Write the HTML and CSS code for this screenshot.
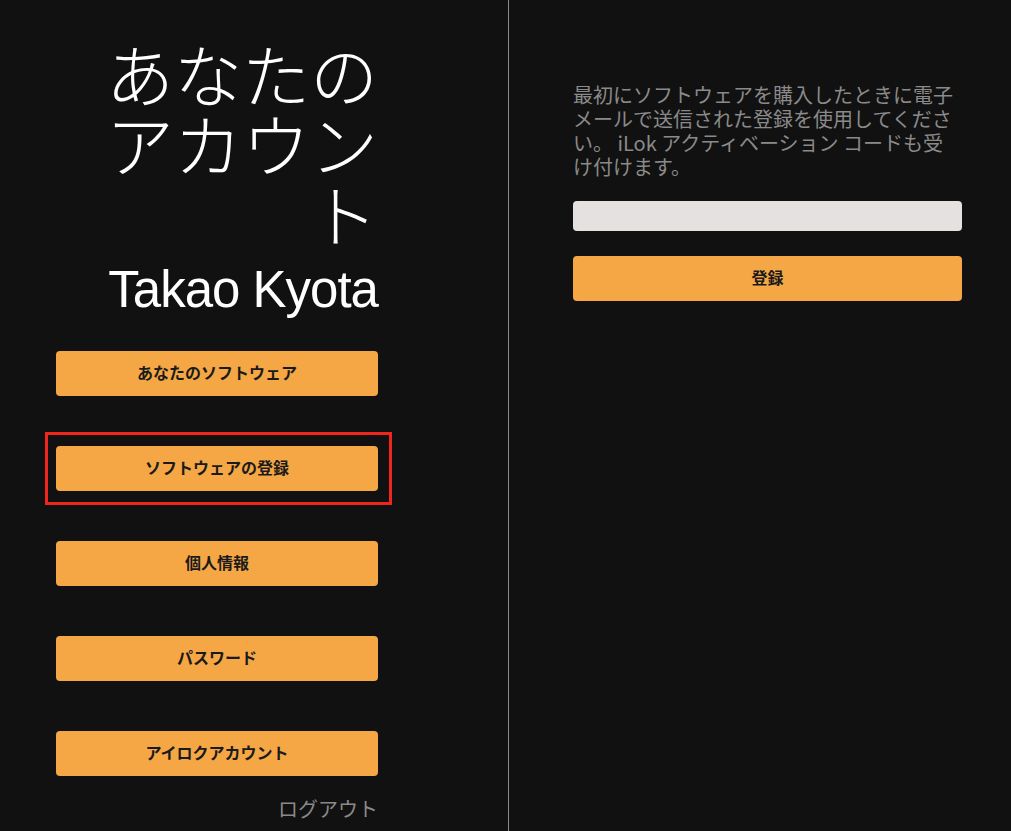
FILE: index.html
```html
<!DOCTYPE html>
<html lang="ja">
<head>
    <meta charset="UTF-8">
    <meta name="viewport" content="width=device-width, initial-scale=1.0">
    <title>あなたのアカウント</title>
    <link rel="stylesheet" href="styles.css">
</head>
<body>
    <div class="page">
        <!-- Account menu -->
        <div class="side">
            <h1 class="title">あなたの<br>アカウント</h1>
            <p class="user-name">Takao Kyota</p>

            <div class="menu">
                <a href="#" class="menu-btn">あなたのソフトウェア</a>
                <a href="#" class="menu-btn menu-btn-active">ソフトウェアの登録</a>
                <a href="#" class="menu-btn">個人情報</a>
                <a href="#" class="menu-btn">パスワード</a>
                <a href="#" class="menu-btn">アイロクアカウント</a>
            </div>

            <a href="#" class="logout">ログアウト</a>
        </div>

        <!-- Register form -->
        <div class="main">
            <p class="intro">最初にソフトウェアを購入したときに電子メールで送信された登録を使用してください。 iLok アクティベーション コードも受け付けます。</p>
            <input type="text" class="code-input">
            <button class="submit-btn">登録</button>
        </div>
    </div>
</body>
</html>
```

FILE: styles.css
```css
* {
    margin: 0;
    padding: 0;
    box-sizing: border-box;
}

body {
    font-family: "Noto Sans CJK JP", "Noto Sans", sans-serif;
    background: #111111;
    color: #ffffff;
    height: 831px;
    overflow: hidden;
}

.page {
    display: flex;
    height: 831px;
}

.side {
    width: 509px;
    border-right: 1px solid #8a8a8a;
    padding: 38px 0 0 56px;
}

.title,
.user-name,
.menu,
.logout {
    width: 322px;
}

.title {
    font-size: 68px;
    font-weight: 300;
    line-height: 70px;
    text-align: right;
    word-break: break-all;
}

.user-name {
    font-family: "Liberation Sans", sans-serif;
    font-size: 51px;
    font-weight: normal;
    letter-spacing: -1px;
    text-align: right;
    margin-top: 12px;
    line-height: 60px;
}

.menu {
    display: flex;
    flex-direction: column;
    gap: 50px;
    margin-top: 31px;
}

.menu-btn {
    position: relative;
    display: flex;
    align-items: center;
    justify-content: center;
    height: 45px;
    padding-bottom: 4px;
    background: #f5a745;
    border-radius: 4px;
    color: #1a1a1a;
    font-size: 16px;
    font-weight: bold;
    text-decoration: none;
}

.menu-btn-active::after {
    content: "";
    position: absolute;
    left: -11px;
    right: -14px;
    top: -14px;
    bottom: -14px;
    border: 3px solid #f0261c;
}

.logout {
    display: block;
    margin-top: 18px;
    text-align: right;
    color: #8a8a8a;
    font-size: 20px;
    text-decoration: none;
}

.main {
    flex: 1;
    padding: 83px 0 0 64px;
}

.intro {
    width: 382px;
    color: #8a8a8a;
    font-size: 20px;
    line-height: 24px;
}

.code-input {
    display: block;
    width: 389px;
    height: 30px;
    margin-top: 22px;
    background: #e6e1e1;
    border: none;
    border-radius: 4px;
}

.submit-btn {
    display: block;
    width: 389px;
    height: 45px;
    margin-top: 25px;
    padding-bottom: 4px;
    background: #f5a745;
    border: none;
    border-radius: 4px;
    color: #1a1a1a;
    font-family: inherit;
    font-size: 16px;
    font-weight: bold;
    cursor: pointer;
}
```
